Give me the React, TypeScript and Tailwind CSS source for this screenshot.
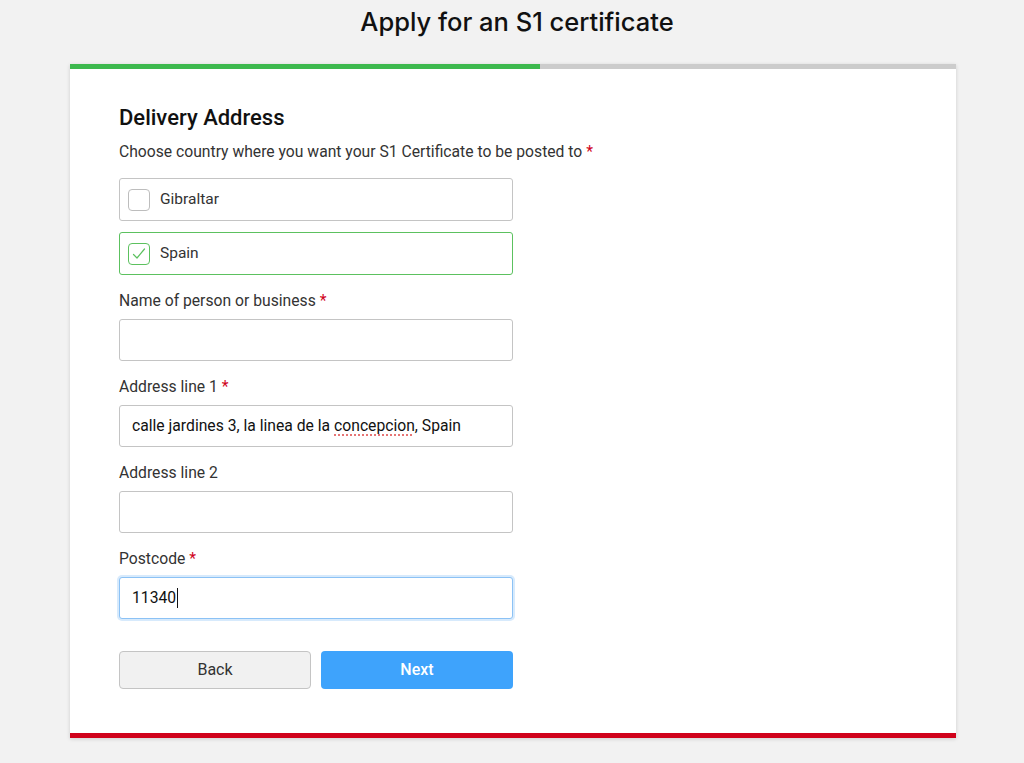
import { useState } from "react";

const body = { fontFamily: "Roboto, 'Noto Sans', 'Liberation Sans', sans-serif" };

function Required() {
  return <span className="text-[#d0021b]"> *</span>;
}

function CountryOption({ label, checked }: { label: string; checked: boolean }) {
  return (
    <div
      className={`flex h-[43px] w-[394px] items-center gap-[10px] rounded-[3px] border-[1.5px] bg-white pl-[8px] ${
        checked ? "border-[#5cc15f]" : "border-[#c4c4c4]"
      }`}
    >
      <div
        className={`flex h-[22px] w-[22px] items-center justify-center rounded-[4px] border-[1.5px] ${
          checked ? "border-[#5cc15f]" : "border-[#bdbdbd]"
        }`}
      >
        {checked ? (
          <svg width="16" height="16" viewBox="0 0 16 16" fill="none">
            <path d="M2.5 8.5 L6 12 L13.5 3" stroke="#5cc15f" strokeWidth="1.2" strokeLinecap="round" strokeLinejoin="round" />
          </svg>
        ) : null}
      </div>
      <span className="pt-[1px] text-[15.5px] text-[#333]">{label}</span>
    </div>
  );
}

function Field({
  label,
  required,
  value,
  focused,
  spell,
}: {
  label: string;
  required?: boolean;
  value: string;
  focused?: boolean;
  spell?: boolean;
}) {
  return (
    <div className="mt-[16px]">
      <div className="text-[15.7px] leading-[20px] text-[#333]">
        {label}
        {required ? <Required /> : null}
      </div>
      <div
        className={`mt-[8px] flex h-[42px] w-[394px] items-center rounded-[3px] border-[1.5px] bg-white px-[12px] text-[15.7px] text-[#111] ${
          focused ? "border-[#8cc2f5] shadow-[0_0_0_2px_rgba(140,194,245,0.35)]" : "border-[#c4c4c4]"
        }`}
      >
        {spell ? (
          <span>
            calle jardines 3, la linea de la{" "}
            <span className="underline decoration-dotted decoration-[#e05050] underline-offset-[3px]">concepcion</span>, Spain
          </span>
        ) : (
          <span>{value}</span>
        )}
        {focused ? <span className="ml-[1px] inline-block h-[20px] w-px bg-[#111]" /> : null}
      </div>
    </div>
  );
}

export default function App() {
  const [step] = useState(0.53);

  return (
    <div className="min-h-[763px] bg-[#f2f2f2] pb-[25px]" style={body}>
      <h1
        className="pt-[6px] pl-[10px] text-center text-[25.5px] leading-[32px] font-medium text-[#111]"
        style={{ fontFamily: "Inter, 'Liberation Sans', sans-serif" }}
      >
        Apply for an S1 certificate
      </h1>
      <div className="mt-[26px] ml-[70px] w-[886px] bg-white shadow-[0_1px_4px_rgba(0,0,0,0.15)]">
        <div className="h-[5px] w-full bg-[#cccccc]">
          <div className="h-full bg-[#3db94e]" style={{ width: `${step * 100}%` }} />
        </div>
        <div className="px-[49px] pt-[37px] pb-[44px]">
          <h2 className="text-[22px] leading-[24px] font-medium text-[#111]">Delivery Address</h2>
          <p className="mt-[12px] text-[15.7px] leading-[20px] text-[#333]">
            Choose country where you want your S1 Certificate to be posted to
            <Required />
          </p>
          <div className="mt-[16px] flex flex-col gap-[11px]">
            <CountryOption label="Gibraltar" checked={false} />
            <CountryOption label="Spain" checked />
          </div>
          <Field label="Name of person or business" required value="" />
          <Field label="Address line 1" required value="" spell />
          <Field label="Address line 2" value="" />
          <Field label="Postcode" required value="11340" focused />
          <div className="mt-[32px] flex gap-[10px]">
            <button className="h-[38px] w-[192px] rounded-[4px] border-[1.5px] border-[#c4c4c4] bg-[#f1f1f1] text-[16px] text-[#333]">
              Back
            </button>
            <button className="h-[38px] w-[192px] rounded-[4px] bg-[#3ea3fc] text-[16px] font-medium text-white">
              Next
            </button>
          </div>
        </div>
        <div className="h-[5px] bg-[#d0021b]" />
      </div>
    </div>
  );
}
